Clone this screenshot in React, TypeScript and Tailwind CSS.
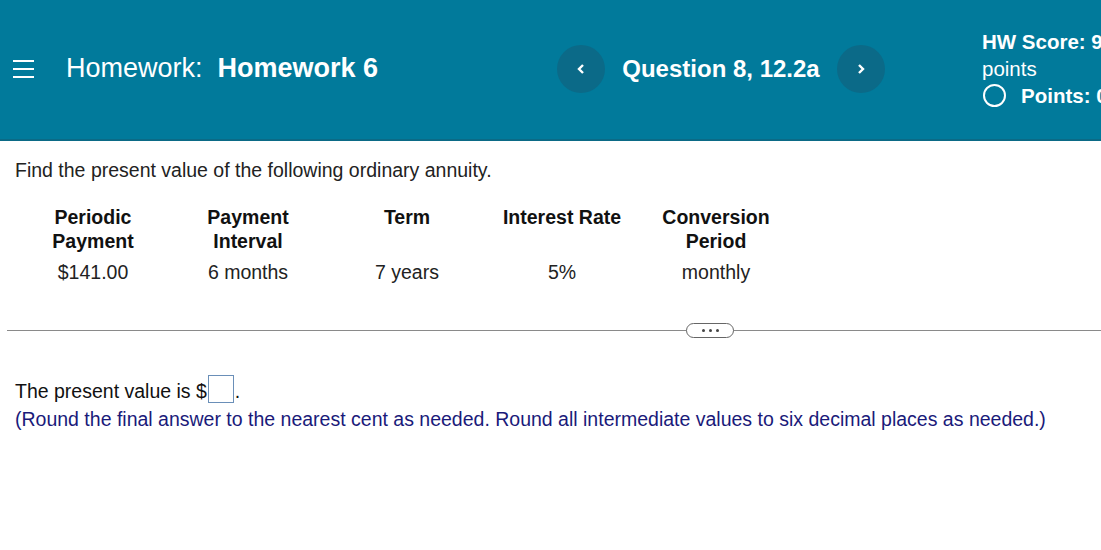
import React from "react";

const F = { fontFamily: '"Liberation Sans", Arial, sans-serif' };

export default function App() {
  const cols = [
    { w: "w-[156px]", h: ["Periodic", "Payment"], v: "$141.00" },
    { w: "w-[154px]", h: ["Payment", "Interval"], v: "6 months" },
    { w: "w-[164px]", h: ["Term"], v: "7 years" },
    { w: "w-[146px]", h: ["Interest Rate"], v: "5%" },
    { w: "w-[162px]", h: ["Conversion", "Period"], v: "monthly" },
  ];
  return (
    <div className="w-[1101px] h-[550px] bg-white overflow-hidden" style={F}>
      <header className="relative h-[141px] bg-[#017a9b] border-b-2 border-[#0b6a86] text-white flex items-center">
        <div className="w-[66px] pl-[13px] flex flex-col gap-[6px] -mt-[2px]">
          <span className="block w-[21px] h-[2px] bg-white" />
          <span className="block w-[21px] h-[2px] bg-white" />
          <span className="block w-[21px] h-[2px] bg-white" />
        </div>
        <div className="text-[27px] -mt-[2px] whitespace-nowrap">
          Homework:&nbsp; <span className="font-bold">Homework 6</span>
        </div>
        <div className="absolute left-[557px] top-[45px] flex items-center">
          <button className="w-[48px] h-[48px] rounded-full bg-[#0b6a88] flex items-center justify-center">
            <svg width="10" height="12" viewBox="0 0 10 12"><path d="M7 2 L3 6 L7 10" stroke="white" strokeWidth="2.4" fill="none" /></svg>
          </button>
          <div className="w-[232px] text-center text-[24px] font-bold">Question 8, 12.2a</div>
          <button className="w-[48px] h-[48px] rounded-full bg-[#0b6a88] flex items-center justify-center">
            <svg width="10" height="12" viewBox="0 0 10 12"><path d="M3 2 L7 6 L3 10" stroke="white" strokeWidth="2.4" fill="none" /></svg>
          </button>
        </div>
        <div className="absolute left-[982px] top-[28px] text-[20.5px] leading-[27px] whitespace-nowrap">
          <div className="font-bold">HW Score: 9</div>
          <div>points</div>
          <div className="flex items-center font-bold">
            <span className="inline-block w-[23px] h-[23px] rounded-full border-[2.5px] border-white ml-[1px] mr-[15px]" />
            Points: 0
          </div>
        </div>
      </header>

      <div className="pl-[15px] pt-[15px] text-[19.5px] text-[#222]">
        Find the present value of the following ordinary annuity.
      </div>

      <div className="flex pl-[15px] mt-[20px] text-[19.5px] text-[#111]">
        {cols.map((c, i) => (
          <div key={i} className={`${c.w} flex flex-col items-center`}>
            <div className="h-[52px] font-bold leading-[24px] text-center">
              {c.h.map((t, j) => (
                <div key={j}>{t}</div>
              ))}
            </div>
            <div className="leading-[24px] text-[#222] mt-[3px]">{c.v}</div>
          </div>
        ))}
      </div>

      <div className="relative mt-[46px] ml-[7px] h-[1px] bg-[#8a8a8a]">
        <div className="absolute left-[679px] -top-[7px] w-[48px] h-[15px] rounded-full border border-[#666] bg-white flex items-center justify-center gap-[4px]">
          <span className="w-[3px] h-[3px] rounded-full bg-[#444]" />
          <span className="w-[3px] h-[3px] rounded-full bg-[#444]" />
          <span className="w-[3px] h-[3px] rounded-full bg-[#444]" />
        </div>
      </div>

      <div className="pl-[15px] mt-[44px] text-[19.5px] text-[#111] flex items-end leading-[24px]">
        The present value is $
        <span className="inline-block w-[26px] h-[28px] border border-[#6a8fb8] mx-[1px]" />
        .
      </div>
      <div className="pl-[15px] mt-[4px] text-[19.5px] text-[#1a1a7a] leading-[24px] whitespace-nowrap">
        (Round the final answer to the nearest cent as needed. Round all intermediate values to six decimal places as needed.)
      </div>
    </div>
  );
}
